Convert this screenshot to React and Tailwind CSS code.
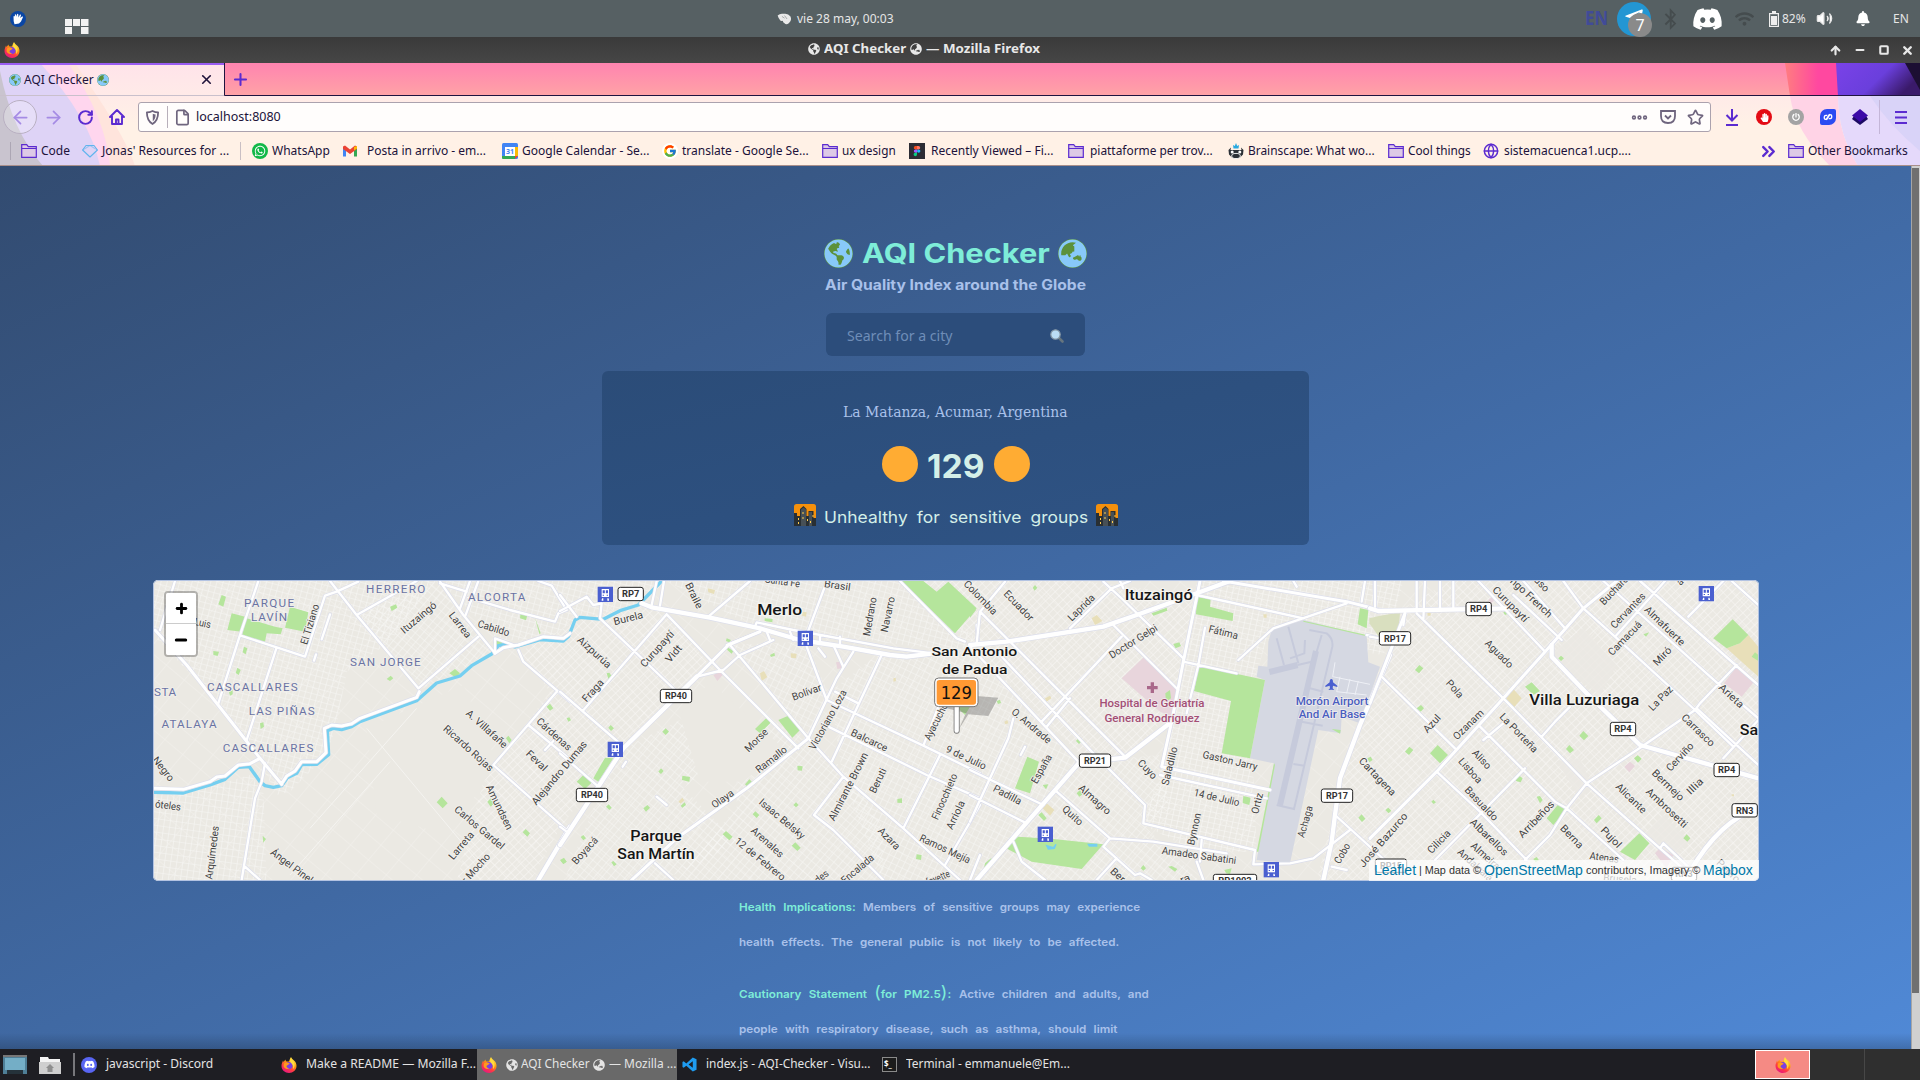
import React, { useLayoutEffect, useRef, useState } from "react";
import { FaDiscord, FaWhatsapp, FaBluetoothB, FaGlobeAmericas, FaGlobeAsia, FaTelegramPlane, FaWifi, FaBell, FaHandPaper, FaPowerOff } from "react-icons/fa";
import { FcGoogle } from "react-icons/fc";
import { ArrowLeft, ArrowRight, ArrowUp, RotateCw, Plus, X, Minus, Square, File, Star, Ellipsis, Menu, ChevronsRight, Globe, Volume2 } from "lucide-react";

/* Single line of text stretched to an exact width. */
function Fit({ w, className = "", children }) {
  const ref = useRef(null);
  const [s, setS] = useState(1);
  useLayoutEffect(() => {
    setS(w / ref.current.offsetWidth);
  }, [w]);
  return (
    <span className={"inline-block shrink-0 whitespace-nowrap " + className} style={{ width: w }}>
      <span ref={ref} className="inline-block origin-left" style={{ transform: `scaleX(${s})` }}>
        {children}
      </span>
    </span>
  );
}

function Firefox({ className = "h-4 w-4" }) {
  return (
    <svg viewBox="0 0 32 32" className={"shrink-0 " + className}>
      <defs>
        <linearGradient id="ffx" x1="0.8" y1="0" x2="0.25" y2="1">
          <stop offset="0" stopColor="#fff44f" />
          <stop offset="0.4" stopColor="#ff980e" />
          <stop offset="0.7" stopColor="#ff3647" />
          <stop offset="1" stopColor="#e31587" />
        </linearGradient>
      </defs>
      <path d="M20 0c1 3 4 5 6 7 3 2 5 6 5 11 0 8-7 14-15 14S1 26 1 18c0-5 2-8 3-11l1 3 4-5c0 2 1 3 2 4h5c1-3 2-6 4-9z" fill="url(#ffx)" />
      <circle cx="16.5" cy="17" r="6.8" fill="#7a3fe0" />
      <path d="M6 13c3-3 7-2 9-1 3 0 3 2 0 3-1 2-4 1-4 4 0 2 3 4 6 3-4 4-11 1-12-4z" fill="#ff9a1f" />
      <path d="M20 1c0 4 7 6 7 13 1 5-1 8-3 10 1-6 0-9-5-13-2-4 0-7 1-10z" fill="#ffdc3e" />
    </svg>
  );
}

function Earth({ asia, className }) {
  const G = asia ? FaGlobeAsia : FaGlobeAmericas;
  return (
    <span className={"flex shrink-0 items-center justify-center rounded-full bg-[#5c913b] " + className}>
      <G className="h-full w-full text-[#88c9f9]" />
    </span>
  );
}

function Folder() {
  return (
    <svg viewBox="0 0 16 16" className="h-4 w-4 shrink-0">
      <path d="M.7 14.3V1.7h5l1.6 2h8v10.6z" fill="#ddc9e6" stroke="#5b2bd0" strokeWidth="1.2" />
      <path d="M.7 5.5h14.6" stroke="#5b2bd0" />
    </svg>
  );
}

function City() {
  return (
    <svg viewBox="0 0 22 22" className="h-[22px] w-[22px] shrink-0">
      <rect width="22" height="22" rx="2.5" fill="#f4900c" />
      <path d="M0 22V9h3v3h3V5l3.500-3 3 3v7h2V7h5v7h2.500v8z" fill="#292f33" />
      <path d="M7 22V5.500l2.500-2 2.500 2V22zM15 22V8h3v14z" fill="#475056" />
      <path d="M4 14h1v2H4zM4 18h1v2H4zM8.500 8h1v2h-1zM8.500 13h1v2h-1zM13 15h1v2h-1zM18.500 11h1v2h-1zM16 17h1v2h-1z" fill="#ffcc4d" />
    </svg>
  );
}

function VSCode() {
  return (
    <svg viewBox="0 0 16 16" className="h-[15px] w-[15px] shrink-0">
      <path d="M11.500.5 15.500 2.400v11.200L11.500 15.500 4.600 9.200 1.800 11.400.5 10.700V5.300l1.300-.7 2.800 2.200zM11.500 4.500 7 8l4.500 3.500z" fill="#1f9cf0" fillRule="evenodd" />
    </svg>
  );
}

/* ---------- desktop panel ---------- */

function TopPanel() {
  return (
    <div className="flex h-[37px] items-center bg-[#566063] text-[12px] text-[#e6e6e6]">
      <svg viewBox="0 0 16 16" className="ml-[10px] h-4 w-4">
        <circle cx="8" cy="8" r="8" fill="#0a46a4" />
        <path d="M3.500 6c0-1 1-1.500 1.500-.5L4.800 3.800c.3-.8 1-.8 1.300 0l.6 2L7 3.300c.4-.8 1.200-.7 1.300.1l.2 3 1.300-2.700c.5-.6 1.300-.3 1.200.5L10.200 7l1.800-1.500c.8-.3 1.200.3.8 1L11 10.500l-2 2-4.500.8-.8-3z" fill="#fff" />
      </svg>
      <svg viewBox="0 0 24 16" className="ml-[39px] mt-[16px] h-4 w-6" fill="#f2f2f2">
        <path d="M0 0h7v7H0zM8 0h7v7H8zM16 0h7.500v7H16zM0 8h7v7H0zM16 8h7.500v7H16z" />
      </svg>
      <svg viewBox="0 0 16 14" className="ml-[688px] h-[12px] w-[15px]">
        <path d="M0 3Q3 0 7 1q5-1 8 3 2 5-2 8-3 2-5 0-2-1-2-3-3 1-4-2-1-1-2-4z" fill="#e9e9e9" />
        <path d="m5 4 3 2M8 3l3 4" stroke="#9a9f9f" />
      </svg>
      <Fit w={97} className="ml-[5px]">vie 28 may, 00:03</Fit>
      <Fit w={23} className="ml-[691px] text-[19px] font-bold text-[#414b98]">EN</Fit>
      <span className="relative ml-[9px] flex h-[34px] w-[34px] shrink-0 items-center justify-center rounded-full bg-[#2396d3]">
        <FaTelegramPlane className="mb-1 h-5 w-5 text-white" />
        <span className="absolute -bottom-px -right-px flex h-[24px] w-[24px] items-center justify-center rounded-full bg-[#8a8a8a] text-[16px] text-white">7</span>
      </span>
      <FaBluetoothB className="ml-[12px] h-[22px] w-[15px] text-[#454c4e]" />
      <FaDiscord className="ml-[14px] h-[30px] w-[31px] text-white" />
      <FaWifi className="ml-[12px] h-[18px] w-[19px] text-[#454c4e]" />
      <svg viewBox="0 0 10 16" className="ml-[15px] h-4 w-[10px]">
        <path d="M3 0h4v2h3v14H0V2h3z" fill="#eee" />
        <path d="M1.200 3.200h7.600v11.600H1.200z" fill="#566063" />
        <path d="M2 5h6v9H2z" fill="#eee" />
      </svg>
      <Fit w={24} className="ml-[3px]">82%</Fit>
      <Volume2 className="ml-[10px] h-[17px] w-[17px] fill-white" />
      <FaBell className="ml-[23px] h-[15px] w-[14px] text-white" />
      <Fit w={16} className="ml-[23px]">EN</Fit>
    </div>
  );
}

function TitleBar() {
  return (
    <div className="flex h-[26px] items-center bg-gradient-to-b from-[#3a3a3a] to-[#464646] pb-[2px] text-[12px] font-bold text-[#e8e8e8]">
      <Firefox className="ml-[4px] mt-[2px] h-[16px] w-[16px]" />
      <FaGlobeAmericas className="ml-[788px] h-[12px] w-[12px]" />
      <Fit w={82} className="ml-[4px]">AQI Checker</Fit>
      <FaGlobeAsia className="ml-[4px] h-[12px] w-[12px]" />
      <Fit w={114} className="ml-[4px]">— Mozilla Firefox</Fit>
      <ArrowUp strokeWidth={4} className="ml-[789px] mt-[2px] h-[13px] w-[13px]" />
      <Minus strokeWidth={4} className="ml-[12px] mt-[2px] h-[12px] w-[12px]" />
      <Square strokeWidth={5} className="ml-[13px] mt-[2px] h-[10px] w-[10px]" />
      <X strokeWidth={4.5} className="ml-[12px] mt-[2px] h-[13px] w-[13px]" />
    </div>
  );
}

/* ---------- browser chrome ---------- */

const bookmarks = [
  ["Code", 29, "folder", "ml-[10px]", "ml-1"],
  ["Jonas' Resources for ...", 127, "gem", "ml-[12px]", "ml-1"],
  ["WhatsApp", 58, "wa", "ml-[11px]", "ml-1"],
  ["Posta in arrivo - em...", 119, "gmail", "ml-[12px]", "ml-[9px]"],
  ["Google Calendar - Se...", 127, "cal", "ml-[16px]", "ml-1"],
  ["translate - Google Se...", 127, "google", "ml-[13px]", "ml-1"],
  ["ux design", 54, "folder", "ml-[13px]", "ml-1"],
  ["Recently Viewed – Fi...", 122, "figma", "ml-[13px]", "ml-[6px]"],
  ["piattaforme per trov...", 123, "folder", "ml-[15px]", "ml-[6px]"],
  ["Brainscape: What wo...", 127, "brain", "ml-[15px]", "ml-1"],
  ["Cool things", 63, "folder", "ml-[13px]", "ml-1"],
  ["sistemacuenca1.ucp....", 127, "globe", "ml-[12px]", "ml-[5px]"],
];

function BookmarkIcon({ kind }) {
  switch (kind) {
    case "folder":
      return <Folder />;
    case "gem":
      return (
        <svg viewBox="0 0 16 16" className="h-4 w-4 shrink-0" fill="none" stroke="#5fb4ee" strokeWidth="1.100" strokeLinejoin="round">
          <path d="M4 2.500h8L15.400 7 8 14 .6 7z" />
          <path d="M.6 7 4 5l4-2.500L12 5l3.400 2" opacity="0.500" />
        </svg>
      );
    case "wa":
      return (
        <span className="flex h-4 w-4 shrink-0 items-center justify-center rounded-full bg-[#12b848]">
          <FaWhatsapp className="h-3 w-3 text-white" />
        </span>
      );
    case "gmail":
      return (
        <svg viewBox="0 0 16 16" className="h-4 w-4 shrink-0">
          <path d="M1 4v9.500h3V7z" fill="#4285f4" />
          <path d="M15 4v9.500h-3V7z" fill="#34a853" />
          <path d="M1 3.500 3 2.500 8 6.500l5-4 2 1V6L8 11 1 6z" fill="#ea4335" />
          <path d="M12 4v3.500L15 5.500V3z" fill="#fbbc04" />
        </svg>
      );
    case "cal":
      return (
        <svg viewBox="0 0 16 16" className="h-4 w-4 shrink-0">
          <rect width="16" height="16" rx="1.500" fill="#4285f4" />
          <path d="M13 4h3v9h-3z" fill="#fbbc04" />
          <path d="M0 13h13v3H1.500Q0 16 0 14.500z" fill="#34a853" />
          <path d="M13 13h3l-3 3z" fill="#ea4335" />
          <path d="M3 4h10v9H3z" fill="#fff" />
          <text x="8" y="11" fontSize="7" fontWeight="700" textAnchor="middle" fill="#4285f4">31</text>
        </svg>
      );
    case "google":
      return (
        <span className="flex h-4 w-4 shrink-0 items-center justify-center rounded-full bg-white">
          <FcGoogle className="h-[14px] w-[14px]" />
        </span>
      );
    case "figma":
      return (
        <svg viewBox="0 0 16 16" className="h-4 w-4 shrink-0">
          <path d="M0 0h16v16H0z" fill="#2c2c34" />
          <path d="M8 3H6.500a1.700 1.700 0 0 0 0 3.400H8z" fill="#f24e1e" />
          <path d="M8 3h1.500a1.700 1.700 0 0 1 0 3.400H8z" fill="#ff7262" />
          <path d="M8 6.400H6.500a1.700 1.700 0 0 0 0 3.400H8z" fill="#a259ff" />
          <circle cx="9.700" cy="8.100" r="1.700" fill="#1abcfe" />
          <path d="M8 9.800H6.500A1.700 1.700 0 1 0 8 11.500z" fill="#0acf83" />
        </svg>
      );
    case "brain":
      return (
        <svg viewBox="0 0 16 16" className="h-4 w-4 shrink-0">
          <path d="M.5 7 3 4.500 2.500 7h11L13 4.500 15.500 7l-.5 4.500-3 3H4l-3-3z" fill="#2b3036" />
          <path d="m8 0 1.200 3L11 2l-.5 3.500h-5L5 2l1.800 1z" fill="#29a9e0" />
          <circle cx="4.200" cy="9" r="1.500" fill="#fff" />
          <circle cx="11.800" cy="9" r="1.500" fill="#fff" />
          <ellipse cx="8" cy="13" rx="4.300" ry="2.600" fill="#2b3036" stroke="#fff" strokeWidth="0.900" />
        </svg>
      );
    default:
      return <Globe strokeWidth={2.2} className="h-4 w-4 shrink-0 text-[#5b2bd0]" />;
  }
}

function BrowserChrome() {
  return (
    <div className="relative h-[103px] overflow-hidden bg-[#fff1e6]">
      {/* theme artwork behind the bars */}
      <svg viewBox="0 0 1920 103" className="absolute inset-0 h-[103px] w-[1920px]">
        <defs>
          <linearGradient id="strip" x1="0" y1="0" x2="0" y2="1">
            <stop offset="0" stopColor="#ff84b0" />
            <stop offset="1" stopColor="#ffa3a6" />
          </linearGradient>
          <linearGradient id="tool" x1="0" y1="0" x2="0" y2="1">
            <stop offset="0" stopColor="#ffe3ea" />
            <stop offset="0.6" stopColor="#fff1e6" />
          </linearGradient>
          <linearGradient id="hot" x1="0" y1="0" x2="1" y2="0">
            <stop offset="0" stopColor="#ff7d80" />
            <stop offset="0.6" stopColor="#ff48a0" />
          </linearGradient>
          <linearGradient id="vio" x1="0" y1="0" x2="1" y2="0.4">
            <stop offset="0" stopColor="#7a42e8" />
            <stop offset="0.6" stopColor="#6a3fdc" />
            <stop offset="1" stopColor="#3a1a6a" />
          </linearGradient>
        </defs>
        <path d="M0 0h1920v103H0z" fill="url(#tool)" />
        <path d="M224 0H1920v33H224z" fill="url(#strip)" />
        <path d="M1785 0h55v33h-50z" fill="url(#hot)" />
        <path d="M1836 0h84v33h-82z" fill="url(#vio)" />
        <path d="M1905 0h15v27z" fill="#1c0f33" />
        <path d="M0 0h75l22 33q30 45 38 70H0z" fill="#ffe4dc" />
        <path d="M0 0h68q38 55 42 103H0z" fill="#ffd6ee" />
        <path d="M0 0h40q50 55 60 103H0z" fill="#ded3f6" />
        <path d="M0 8q12 60 43 95H0z" fill="#c9c4cf" />
        <path d="M1790 33h48q0 38 20 70h-28q-35-35-40-70z" fill="#ffd3e6" />
        <path d="M1838 33h82v70h-62q-20-32-20-70z" fill="#e5d9fb" />
        <path d="M1870 33h50v55q-30-25-50-55z" fill="#d9d3f8" />
        <path d="M0 0h224v2H0z" fill="#9a5cf2" />
        <path d="M224.500 0v32.500H1920" fill="none" stroke="#1f1440" />
        <path d="M0 32.500h224" stroke="#c9c0cc" />
        <path d="M0 102.500h1920" stroke="#a98f8b" />
      </svg>
      <div className="relative flex h-[33px] items-center text-[12px] text-[#20123a]">
        <Earth className="ml-[9px] h-[12px] w-[12px]" />
        <Fit w={70} className="ml-[3px]">AQI Checker</Fit>
        <Earth asia className="ml-[3px] h-[12px] w-[12px]" />
        <X strokeWidth={2.600} className="ml-[90px] h-[15px] w-[15px]" />
        <Plus strokeWidth={2.600} className="ml-[17px] h-[19px] w-[19px] text-[#5b2bd0]" />
      </div>
      <div className="relative mt-px flex h-[40px] items-center text-[#5b2bd0]">
        <span className="ml-[3px] flex h-[34px] w-[34px] items-center justify-center rounded-full border border-[#b9b0c2] bg-white/25">
          <ArrowLeft className="h-[21px] w-[21px] text-[#a58be4]" />
        </span>
        <ArrowRight className="ml-[6px] h-[21px] w-[21px] text-[#a58be4]" />
        <RotateCw strokeWidth={2.800} className="ml-[13px] h-[17px] w-[17px]" />
        <svg viewBox="0 0 16 16" className="ml-[15px] h-4 w-4" fill="none" stroke="currentColor" strokeWidth="1.900" strokeLinecap="round" strokeLinejoin="round">
          <path d="M1 8 8 1l7 7M3 7v8h10V7" />
          <path d="M7 15v-4.500h2.500V15" />
        </svg>
        <div className="ml-[13px] flex h-[30px] w-[1573px] items-center rounded-[3px] border border-[#aba2ae] bg-[#fffdfc] text-[#6f657e]">
          <svg viewBox="0 0 16 16" className="ml-[6px] h-[15px] w-[15px]">
            <path d="M8 1q3 1.500 6 1.500 0 9-6 12.500Q2 11.500 2 2.500 5 2.500 8 1z" fill="none" stroke="currentColor" strokeWidth="1.900" strokeLinejoin="round" />
            <path d="M8.300 4q1.500.8 3 .8 0 5-3 7.200z" fill="currentColor" />
          </svg>
          <span className="ml-[7px] h-[22px] w-px bg-[#b8afba]" />
          <File strokeWidth={2.400} className="ml-[6px] h-[17px] w-[17px]" />
          <Fit w={85} className="ml-[5px] text-[12.5px] text-[#20123a]">localhost:8080</Fit>
          <Ellipsis strokeWidth={3.500} className="ml-[1349px] h-[19px] w-[19px]" />
          <svg viewBox="0 0 16 16" className="ml-[11px] h-[16px] w-[16px]" fill="none" stroke="currentColor" strokeWidth="1.800">
            <path d="M1 2h14v5q0 7-7 7T1 7z" />
            <path d="m5 6.500 3 3 3-3" />
          </svg>
          <Star strokeWidth={2.400} className="ml-[11px] h-[17px] w-[17px]" />
        </div>
        <svg viewBox="0 0 16 18" className="ml-[13px] h-[18px] w-[16px]" fill="none" stroke="currentColor" strokeWidth="2">
          <path d="M8 1v11M2.500 7 8 12.500 13.500 7M2 17h12" />
        </svg>
        <span className="ml-[16px] flex h-[16px] w-[16px] items-center justify-center rounded-full bg-[#e30b14]">
          <FaHandPaper className="h-[9px] w-[9px] text-white" />
        </span>
        <span className="ml-[16px] flex h-[16px] w-[16px] items-center justify-center rounded-full bg-[#a3a3a3]">
          <FaPowerOff className="h-[8px] w-[8px] text-white" />
        </span>
        <span className="ml-[16px] flex h-[16px] w-[16px] items-center justify-center rounded-[2px] rounded-br-[7px] rounded-tl-[7px] bg-[#2b4bf2]">
          <svg viewBox="0 0 16 16" className="h-3 w-3" fill="none" stroke="#fff" strokeWidth="1.800">
            <path d="M11 4 6.500 11Q3 12 3 8.500T7 6M5 12 9.500 5Q13 4 13 7.500T9 10" />
          </svg>
        </span>
        <svg viewBox="0 0 16 16" className="ml-[16px] h-4 w-4">
          <path d="m0 10 2-3h12l2 3-8 6z" fill="#1c0a63" />
          <path d="m8 0 8 6.500-8 6.500-8-6.500z" fill="#3c0aa8" />
        </svg>
        <span className="ml-[11px] h-[34px] w-px bg-[#c4b6d8]" />
        <svg viewBox="0 0 12 13" className="ml-[15px] h-[13px] w-[12px]" stroke="currentColor" strokeWidth="2">
          <path d="M0 1h12M0 6.500h12M0 12h12" />
        </svg>
      </div>
      <div className="relative mt-px flex h-[26px] items-center text-[12px] text-[#20123a]">
        <span className="ml-[10px] h-[18px] w-px bg-[#aca6b4]" />
        {bookmarks.map(([label, w, kind, before, gap]) => (
          <React.Fragment key={label}>
            {kind === "wa" && <span className="ml-[11px] h-[18px] w-px shrink-0 bg-[#c9bfc4]" />}
            <span className={"flex shrink-0 items-center " + before}>
              <BookmarkIcon kind={kind} />
              <Fit w={w} className={gap}>{label}</Fit>
            </span>
          </React.Fragment>
        ))}
        <ChevronsRight strokeWidth={2.800} className="ml-auto mr-[9px] h-[21px] w-[21px] text-[#5b2bd0]" />
        <span className="mr-[12px] flex shrink-0 items-center gap-1">
          <Folder />
          <Fit w={100}>Other Bookmarks</Fit>
        </span>
      </div>
    </div>
  );
}

/* ---------- map ---------- */
/* Map units are a third of a pixel; the sheet is cut in four tiles. */

const tiles = [
  {
    x: 0,
    roads: [
      [8, "M75 18 30 165M325 18 270 180 205 385M272 182 380 217 465 245 525 62 560 50 625 20M380 217 290 495M540 18 620 120 700 215 805 340M620 120 800 18M870 20 940 120 1035 235M805 340 985 185M870 25 950 50M960 18 930 100M985 18 945 125M955 68 1080 105 1215 140 1225 115 1250 105 1205 32 1165 18M345 565 335 620 315 670 275 915M285 875 330 915M1105 225 1120 260 1260 380M1220 350 1030 570 1250 765M1135 450 1250 545M1035 235V190L1090 210M540 118 515 193M498 238 492 257M1210 498 1185 525"],
      [10, "M15 165 110 270 330 550 395 628M12 640 100 643 180 620 200 606 225 603 265 570 300 566 330 550M395 626 410 603 435 588 455 560 500 560 528 533 523 460 545 450 575 453 605 446 630 430 800 367 808 350M1035 235 1060 218 1105 210 1180 185 1240 190 1260 175"],
      [14, "M1260 755 1165 915"],
    ],
    green: "M245 115 285 125 275 170 232 165ZM290 130 375 155 398 160 392 178 350 175 345 200 275 185ZM420 95 475 112 465 170 405 158ZM720 95 738 88 742 98 725 108ZM1112 112 1132 120 1128 136 1110 130ZM898 295 915 282 930 295 918 308ZM860 682 875 665 893 685 878 700ZM215 60 228 65 220 95 205 88ZM190 228 207 230 203 243 190 240ZM282 215 292 220 287 238 278 232ZM262 278 272 285 266 300 257 294ZM1035 190 1060 198 1050 215 1030 205ZM1190 395 1200 386 1210 400 1200 407ZM1118 772 1127 762 1140 775 1132 785ZM1232 857 1242 848 1250 860 1240 867ZM330 445 340 442 342 455 332 462ZM1012 680 1022 670 1033 685 1022 695ZM710 312 722 302 730 310 720 318ZM1155 128 1172 175 1168 177ZM1068 490 1075 482 1085 495 1078 505ZM338 782 348 792 340 803ZM237 352 248 345 248 358 240 362Z",
    labels: [
      ["Luis", 158, 145, 12, 50], ["El Tiziano", 480, 148, -73, 125], ["Ituzaingó", 806, 128, -40, 130], ["Larrea", 930, 150, 52, 90], ["Cabildo", 1031, 160, 17, 98],
      ["A. Villafañe", 1010, 462, 42, 155], ["Ricardo Rojas", 955, 520, 42, 190], ["Cárdenas", 1212, 478, 42, 130], ["Feval", 1160, 557, 44, 75], ["Amundsen", 1048, 697, 64, 145],
      ["Carlos Gardel", 988, 758, 40, 185], ["Larreta", 934, 812, -50, 100], ["r Mocho", 978, 880, -48, 110], ["Ángel Pinel", 425, 873, 37, 150], ["Arquímedes", 187, 833, -83, 162], ["Negro", 40, 582, 52, 85], ["óteles", 54, 692, 8, 78], ["Alejandro Dumas", 1228, 594, -50, 240],
    ],
    areas: [["PARQUE", 357, 83, 150], ["LAVÍN", 357, 124, 108], ["HERRERO", 737, 41, 178], ["ALCORTA", 1040, 64, 172], ["SAN JORGE", 706, 260, 212], ["CASCALLARES", 307, 336, 272], ["LAS PIÑAS", 395, 408, 198], ["ATALAYA", 117, 445, 165], ["CASCALLARES", 354, 518, 272], ["STA", 45, 350, 66]],
    shields: [], trains: [], towns: [],
  },
  {
    x: 1230,
    roads: [
      [8, "M585 155 590 142 700 165 1000 220 1120 235M740 180 800 20M445 125 570 18M320 118 480 285 715 520M320 118 68 408M0 60 50 125M0 108 80 65 100 90 125 85 120 130 345 345M275 90 290 18M300 92 312 18M410 305 490 285 540 240 640 195M620 170 630 195M510 210 745 490M0 350 185 510M0 535 115 635M0 755 20 770M745 490 830 310 880 230M740 215 800 375 1090 512 1260 595M965 240 815 560M785 445 1100 600 1260 670M745 490 850 605 1030 760 1200 915M850 605 762 720 820 765 970 915M1140 540 1030 760M1135 395 1090 512M1260 690 1155 870M1260 840 1230 915M1020 18 1190 190 1215 200M1250 150 1255 210M285 865 340 915M825 350 895 385M820 210 850 275M775 220 795 245M290 665 320 690M198 560 188 575M500 210 600 170M780 180V205M840 185V215M690 170 700 195"],
      [10, "M745 490 560 640 350 790 215 915M600 170 505 210 410 305"],
      [14, "M245 85 275 97 450 128 600 160 720 195 850 215 990 240 1040 245 1120 235M410 305 190 520 115 635 0 810"],
    ],
    green: "M1025 18H1090L1130 50 1165 20 1250 100 1185 175ZM655 435 685 422 720 465 697 488ZM585 462 620 428 635 440 600 475ZM100 610 135 548 160 550 115 620ZM50 620 70 600 98 620 75 642ZM1190 395H1230L1215 420ZM140 295 148 293 155 303 145 312ZM145 458 152 450 162 460 153 468ZM307 470 317 460 327 470 317 480ZM367 602 390 606 388 620 366 615ZM488 778 498 768 518 785 508 796ZM695 812 706 802 722 818 712 828ZM578 718 586 709 598 720 590 729ZM555 628 568 613 577 622 562 635ZM250 700 262 690 270 698 258 710ZM295 590 303 580 311 588 303 597ZM614 130 638 132 637 142 614 138ZM712 572 728 574 726 587 713 586ZM1012 672 1026 670 1026 684 1012 683ZM1070 838 1085 840 1083 855 1068 852ZM630 240 643 233 645 242 633 246ZM500 190 513 195 508 202 498 198ZM500 215 520 228 515 236 502 225ZM362 692 374 682 378 690 367 698ZM154 862 160 858 170 868 162 874ZM700 690 708 682 716 690 708 697ZM20 430 28 427 33 436 25 440ZM62 786 70 780 78 790 70 796ZM0 855 10 850 20 860 10 867ZM138 695 146 688 155 698 148 705Z",
    tan: "M600 295 612 288 622 306 605 318ZM692 235 710 236 708 250 693 248ZM443 40 465 45 462 57 445 52ZM728 110 740 112 738 125 726 122ZM355 680 367 668 373 676 362 686ZM1000 310 1007 308 1008 318 1000 320Z",
    pink: "M828 262 840 260 845 280 832 282ZM460 300 480 290 490 298 472 318Z",
    labels: [
      ["Braile", 402, 62, 64, 82], ["Burela", 205, 130, -14, 90], ["Aizpurúa", 103, 232, 42, 125], ["Curupaytí", 292, 222, -48, 135], ["Vidt", 341, 236, -50, 58], ["Fraga", 99, 347, -48, 80], ["Santa Fe", 668, 20, 8, 105], ["Brasil", 832, 32, 8, 80],
      ["Medrano", 930, 125, -80, 118], ["Navarro", 984, 118, -78, 108], ["Bolívar", 740, 352, -20, 92], ["Victoriano Loza", 804, 434, -61, 200], ["Morse", 589, 496, -45, 85], ["Ramallo", 634, 554, -38, 110], ["Balcarce", 928, 496, 25, 118], ["Ayacucho", 1128, 440, -63, 120], ["9 de Julio", 1218, 548, 25, 130],
      ["Almirante Brown", 865, 635, -63, 225], ["Beruti", 954, 617, -64, 80], ["Finocchieto", 1154, 665, -66, 148], ["Arriola", 1187, 720, -65, 92], ["Olaya", 488, 672, -35, 74], ["Isaac Belsky", 666, 732, 40, 170], ["Arenales", 622, 802, 42, 120], ["12 de Febrero", 600, 852, 39, 185], ["Azara", 987, 791, 45, 80], ["Ramos Mejía", 1155, 822, 25, 165], ["Encalada", 893, 882, -40, 118], ["Boyacá", 75, 827, -48, 100], ["des", 785, 905, -38, 45], ["Lafayette", 1122, 914, -22, 100],
    ],
    areas: [],
    shields: [["RP7", 212, 57], ["RP40", 348, 363], ["RP40", 96, 660]],
    trains: [[136, 58], [736, 190], [166, 523]],
    towns: [["Merlo", 659, 106, 135, 44], ["Parque", 288, 784, 154, 43], ["San Martín", 288, 838, 232, 43]],
  },
  {
    x: 2460,
    roads: [
      [8, "M400 20 460 75 640 250M105 20 30 110 20 205M30 110 230 310 465 545M0 215 325 560M90 240 370 535M300 160 425 40 480 18M430 150 625 345M455 185 215 440M300 370 230 455M705 158 685 270 650 415M640 260 800 295M680 60 1000 130M805 255 910 160 1130 85M370 535 525 690 520 745 855 825 850 868M260 650 420 790 550 800 770 835M420 790 400 815 495 900 510 895 545 915M0 585 220 690M0 660 170 745M130 430 115 490 0 740M130 800 155 860 225 915M850 868 960 865 1030 850 1140 765M1095 720 1260 870M1185 18 1175 80M1213 18 1215 95M1190 180 1230 190M570 600 890 670M1085 875 1130 885M695 795 690 860M680 860 700 915M1235 305 1260 330M165 515 152 540M450 18 460 40M970 18 980 35M440 850 380 915"],
      [10, "M690 18 640 260 605 440 575 575 900 645M760 18 1130 80 1230 105"],
      [14, "M0 210 110 200 400 155 500 120 680 55 780 18M605 440 465 548 400 555 330 560 260 640 120 800 20 915M1260 240 1170 450 1110 610 1095 720 1085 800 1060 915"],
    ],
    green: "M688 272 885 315 840 550 755 535 783 378 672 348ZM680 65 722 72 720 95 790 115 788 138 678 118ZM145 785 250 792 400 808 335 882 185 860 100 815ZM0 85 18 105 0 128ZM172 545 207 560 180 655 135 640ZM610 207 628 202 633 213 617 220ZM545 115 590 98 592 107 550 122ZM1170 100 1195 105 1190 160 1163 148ZM820 663 842 668 838 690 818 684ZM912 565 915 570 865 830 860 830ZM1000 137 1190 180V184L1000 140ZM188 38 195 30 202 38 194 47ZM318 498 325 490 334 500 327 507ZM45 865 65 848 58 872 42 880ZM205 720 215 712 230 730 222 738ZM1165 728 1175 718 1186 731 1176 741ZM763 885 785 880 780 898 768 895ZM80 378 90 374 93 384 84 387ZM320 655 330 645 338 658 328 665ZM218 630 235 628 228 643ZM595 875 605 873 622 882 615 890ZM512 880 520 870 528 880 520 887ZM1192 550 1202 545 1208 555 1198 562ZM1085 462 1112 465 1110 476ZM586 355 600 345 603 370 588 380Z",
    tan: "M365 130 380 120 397 138 375 150ZM218 700 230 685 253 705 240 722ZM155 788H183V803H158ZM225 370 240 362 244 370 230 380ZM103 440 112 435 115 445 106 448ZM880 118H890V128H881Z",
    pink: "M520 248 620 340 605 425 570 410 455 310Z",
    labels: [
      ["Colombia", 31, 68, 46, 130], ["Ecuador", 146, 92, 46, 115], ["Laprida", 334, 98, -44, 100], ["Doctor Gelpi", 490, 200, -32, 165], ["Fátima", 760, 172, 14, 90], ["O. Andrade", 184, 453, 40, 145], ["España", 215, 582, -60, 95], ["Padilla", 112, 660, 28, 92], ["Almagro", 374, 674, 42, 118], ["Quito", 308, 722, 42, 72], ["Cuyo", 532, 583, 46, 68],
      ["Saladillo", 599, 573, -76, 118], ["Gaston Jarry", 780, 557, 13, 168], ["14 de Julio", 740, 668, 13, 140], ["Ortiz", 862, 685, -76, 64], ["Bynnon", 673, 762, -77, 98], ["Amadeo Sabatini", 687, 842, 8, 225], ["Achaga", 1006, 740, -74, 98], ["Cobo", 1117, 835, -60, 65], ["José Bazurco", 1240, 795, -49, 205], ["Cartagena", 1222, 605, 46, 145], ["Ber", 443, 900, 42, 48], ["ra", 645, 912, -20, 30],
    ],
    areas: [],
    shields: [["RP21", 375, 557], ["RP17", 1101, 662], ["RP1003", 795, 918]],
    trains: [[226, 778], [904, 884]],
    towns: [["San Antonio", 13, 227, 257, 41], ["de Padua", 14, 281, 196, 41], ["Ituzaingó", 566, 60, 204, 43]],
  },
  {
    x: 3660,
    roads: [
      [8, "M15 18V95M140 18V100M165 18 160 135M210 18V100M250 18V100M140 115 400 370 650 625 870 820 950 890M325 18 525 230M885 18 735 185M580 18 640 100 735 185 975 405 1090 515M430 60 575 195M460 18 585 160M700 18 1060 340 1165 430M810 18 1165 330M955 125 1060 18M1085 18 1165 90M1100 270 990 385 975 405 815 515 650 625 590 700 540 780 465 855M1165 435 1060 550M330 455 555 680 590 700 760 855M400 445 340 495M465 580 195 855M200 590 330 710 470 855M515 485 555 440 600 395M35 305 255 520M870 820 880 805 960 880M0 185 30 190M105 115 100 150M430 400 400 370M980 400 1165 570"],
      [10, "M740 18 640 100 530 225 400 370 200 590 0 790M105 115 0 385"],
      [14, "M0 100 25 108 420 100M545 210V245L650 355 810 510 1165 610M1165 700Q1050 735 960 890"],
    ],
    green: "M1030 190 1088 133 1135 180 1110 205 1070 220ZM180 535 203 510 234 540 210 565ZM750 830 808 775 838 805 795 855ZM530 730 570 682 590 705 550 750ZM465 335 485 322 510 348 490 360ZM135 285 148 270 160 280 147 295ZM105 530 118 515 130 525 117 540ZM140 400 153 390 162 400 152 410ZM565 250 573 242 582 250 573 258ZM628 482 640 468 655 483 642 496ZM588 522 598 510 612 525 600 535ZM792 550 803 541 815 551 804 563ZM672 735 686 720 695 730 680 745ZM940 790 950 778 961 790 952 800ZM440 605 448 602 458 610 452 622 438 618ZM500 665 510 663 518 675 510 685ZM46 705 55 698 64 707 56 715ZM820 178 838 172 828 185ZM490 852 500 846 507 856 497 862ZM184 680 190 674 198 682 191 687ZM400 112 408 108 412 117 405 120ZM1145 245 1155 232 1165 240V258Z",
    tan: "M1110 205 1135 180 1165 215V305L1070 220ZM408 372 430 342 455 370 430 400ZM899 205 905 202 908 210 901 212ZM1085 658H1092V664H1085ZM172 113H182V122H173Z",
    pink: "M1100 275 1152 320 1115 365 1062 325ZM855 835 870 818 910 840 890 880ZM763 575 780 560 795 573 778 592ZM355 75 365 67 372 78 362 86Z",
    labels: [
      ["Curupaytí", 421, 88, 45, 138], ["Domingo French", 456, 42, 43, 235], ["uso", 515, 28, 45, 50], ["Aguado", 387, 237, 45, 105], ["Pola", 254, 342, 48, 62], ["Azul", 186, 446, -48, 62], ["Ozanam", 295, 449, -44, 115], ["La Porteña", 446, 474, 46, 150], ["Aliso", 335, 553, 46, 68], ["Lisboa", 301, 587, 48, 90], ["Basualdo", 334, 686, 46, 130], ["Albarellos", 357, 787, 44, 145], ["Cilicia", 207, 800, -46, 85], ["Almeira", 346, 843, 42, 105], ["Andalgalá", 315, 870, 42, 130],
      ["Arribeños", 499, 733, -46, 140], ["Berna", 605, 785, 46, 85], ["Pujol", 723, 787, 46, 75], ["Atenas", 703, 848, 8, 88], ["Brusela", 750, 912, 5, 100], ["Alicante", 783, 670, 44, 115], ["Bermejo", 894, 631, 44, 120], ["Ambrosetti", 890, 699, 43, 158], ["Illia", 975, 634, -44, 56], ["Cerviño", 930, 546, -47, 105], ["Carrasco", 984, 466, 44, 125], ["La Paz", 872, 370, -46, 90], ["Arieta", 1084, 363, 43, 90], ["Miró", 877, 244, -46, 65], ["Almafuerte", 884, 153, 44, 155], ["Camacuá", 765, 190, -46, 130], ["Cervantes", 774, 107, -46, 135], ["Buchardo", 738, 40, -46, 125], ["a", 930, 20, -45, 16], ["Pedro", 1075, 888, 44, 85],
    ],
    areas: [],
    shields: [["RP4", 326, 102], ["RP17", 75, 190], ["RP4", 759, 462], ["RP4", 1070, 585], ["RN3", 1124, 706], ["RP15", 63, 872], ["RN3", 942, 897]],
    trains: [[1009, 56]],
    towns: [["Villa Luzuriaga", 643, 374, 330, 44], ["Sa", 1137, 466, 55, 44]],
  },
];

function Grid({ id, rotate, sx, sy, color }) {
  return (
    <pattern id={id} width={sx} height={sy} patternUnits="userSpaceOnUse" patternTransform={`rotate(${rotate})`}>
      <path d={`M0 0H${sx}M0 0V${sy}`} stroke={color} strokeWidth="3.200" fill="none" />
    </pattern>
  );
}

function MapSheet() {
  return (
    <svg viewBox="9 15 4818 903" className="h-[301px] w-[1606px]" fontFamily="Roboto, sans-serif">
      <defs>
        <Grid id="g15" rotate={15} sx={18} sy={18} color="#f8f7f5" />
        <Grid id="g8" rotate={8} sx={18} sy={20} color="#f8f7f5" />
        <Grid id="g45" rotate={46} sx={17} sy={20} color="#f9f8f6" />
        <Grid id="g38" rotate={40} sx={18} sy={20} color="#f8f7f5" />
        <Grid id="g25" rotate={26} sx={18} sy={20} color="#f8f7f5" />
        <Grid id="g12" rotate={12} sx={18} sy={16} color="#faf9f7" />
        <Grid id="sparse" rotate={40} sx={70} sy={58} color="#f3f1ed" />
      </defs>
      <path d="M0 0H4900V930H0z" fill="#ebe9e3" />
      <path d="M0 0H4900V930H0z" fill="url(#sparse)" />
      <path d="M20 0H870L720 200 590 290 560 450 530 540 420 650 380 660 300 500 200 380 0 170Z" fill="url(#g15)" />
      <path d="M12 655 180 635 300 600 340 640 350 920H0Z" fill="url(#g8)" />
      <path d="M620 120 860 18 1030 235 820 340Z" fill="url(#g38)" />
      <path d="M870 18H1550L1460 90 1290 130 1200 185 1050 200Z" fill="url(#g15)" />
      <path d="M1110 230 1300 130 1480 85 1560 120 1670 260 1400 530 1230 760 1140 920H920L1000 620 1200 350Z" fill="url(#g45)" />
      <path d="M1400 530 1620 420 1700 560 1600 640 1760 800 1620 880 1520 920H1240Z" fill="url(#g38)" />
      <path d="M1550 18H2270L2490 200 2420 230 1800 150Z" fill="url(#g15)" />
      <path d="M1740 210 1970 200 2040 370 1975 480Z" fill="url(#g25)" />
      <path d="M1760 560 1850 430 1975 490 2100 600 2200 760 2200 920H1560L1760 700Z" fill="url(#g38)" />
      <path d="M2040 350 2180 240 2490 230 2790 560 2700 680 2480 920H2200L2080 620Z" fill="url(#g25)" />
      <path d="M2250 18H2800L3130 60 3090 300 3020 460 2930 540 2800 550 2480 220Z" fill="url(#g45)" />
      <path d="M2800 560 3030 540 3060 700 2990 760 3150 920H2480L2700 680Z" fill="url(#g38)" />
      <path d="M3140 18H3760L3700 240 3350 190 3300 370 3320 830H3140L2980 750 3040 560Z" fill="url(#g12)" />
      <path d="M3760 100 3900 18H4827V918H3500L3580 600 3670 380Z" fill="url(#g45)" />
      <path d="M4190 245 4300 160 4400 270 4350 360ZM4220 560 4290 550 4330 640 4290 670ZM4480 780 4540 720 4620 800 4560 850ZM4480 400 4550 340 4620 400 4560 450Z" fill="#ebe9e3" opacity="0.800" />
      <path d="M650 460 940 330 1040 560 900 780 680 720ZM1590 420 1680 320 1900 520 1780 620 1650 620Z" fill="#ebe9e3" />
      <path d="M650 460 1000 880M800 400 480 760M720 560 420 900" stroke="#f5f4f1" strokeWidth="3" fill="none" />
      <g transform="translate(2460 0)">
        <path d="M895 200 905 165 1000 135 1190 182 1195 262 1230 275 1170 445 1115 425 1112 475 1045 465 960 865 860 855 912 565 840 550 885 315 860 305 865 272 892 275Z" fill="#d5d8e2" />
        <g fill="none" stroke="#c6cadb" strokeWidth="6">
          <path d="M1038 228 930 690" strokeWidth="18" />
          <path d="M898 291 983 270" strokeWidth="18" />
          <path d="M1018 165 1070 175Q1090 190 1087 215L972 702 920 690M920 190 942 270M955 155 985 265M1005 195 1003 235 960 250M983 270 1025 260M1055 180 1040 230M970 567 1003 572M995 440 1058 452M1020 340 1060 350" />
        </g>
        <path d="M1095 262 1088 305 1200 328M1110 305 1100 350 1190 360M1140 312 1130 355M1165 318 1155 360" stroke="#eef0f6" strokeWidth="3" fill="none" />
        <path d="M1198 130Q1260 115 1290 115L1285 165 1230 190 1198 145Z" fill="#d9dfbf" />
      </g>
      {tiles.map((t) => (
        <g key={t.x} transform={`translate(${t.x} 0)`}>
          {t.pink && <path d={t.pink} fill="#e8d5dc" />}
          {t.tan && <path d={t.tan} fill="#e8dfb9" />}
          <path d={t.green} fill="#b5e59c" />
        </g>
      ))}
      <path d="M2690 812 2710 818 2718 808 2713 820 2695 822ZM2815 808H2840V813H2818Z" fill="#75cff0" stroke="#75cff0" strokeWidth="4" />
      <path d="M12 652 100 654 180 630 225 613 265 577 298 575 330 620 345 632 370 637 395 632 412 608 440 595 455 569 500 568 536 539 532 467 550 460 575 464 605 455 630 440 800 377 860 324 930 303 965 272 1025 237 1045 212 1065 208 1095 216 1170 194 1240 198 1256 184 1275 135 1290 127 1360 133 1410 107 1465 90 1535 18" fill="none" stroke="#75cff0" strokeWidth="10" strokeLinejoin="round" />
      {tiles.map((t) => (
        <g key={t.x} transform={`translate(${t.x} 0)`} fill="none" strokeLinejoin="round" strokeLinecap="round">
          {t.roads.map(([w, d]) => <path key={w} d={d} stroke="#dcdeeb" strokeWidth={w + 3} />)}
          {t.roads.map(([w, d]) => <path key={w + "f"} d={d} stroke="#fff" strokeWidth={w - 1} />)}
        </g>
      ))}
      {tiles.map((t) => (
        <g key={t.x} transform={`translate(${t.x} 0)`} textAnchor="middle">
          <g fontSize="31" fill="#444" stroke="#f3f1ed" strokeWidth="5" paintOrder="stroke" strokeLinejoin="round">
            {t.labels.map(([s, x, y, a, len]) => (
              <text key={s} transform={`translate(${x} ${y}) rotate(${a})`} y="10" textLength={len} lengthAdjust="spacingAndGlyphs">{s}</text>
            ))}
          </g>
          <g fontSize="35" fill="#6a73a3" stroke="#f1efeb" strokeWidth="5" paintOrder="stroke">
            {t.areas.map(([s, x, y, len]) => (
              <text key={s + y} x={x} y={y + 13} textLength={len}>{s}</text>
            ))}
          </g>
          {t.shields.map(([s, x, y]) => (
            <g key={s + x}>
              <rect x={x - (s.length > 4 ? 65 : s.length > 3 ? 47 : 38)} y={y - 20} width={s.length > 4 ? 130 : s.length > 3 ? 94 : 76} height="40" rx="7" fill="#fff" stroke="#222" strokeWidth="3" />
              <text x={x} y={y + 10} fontSize="28" fontWeight="700" fill="#333" textLength={s.length > 4 ? 100 : s.length > 3 ? 66 : 52} lengthAdjust="spacingAndGlyphs">{s}</text>
            </g>
          ))}
          {t.trains.map(([x, y]) => (
            <g key={x} transform={`translate(${x} ${y})`}>
              <path d="M-23-23H23V23H-23z" fill="#4a5fd0" />
              <path d="M-11-16H11V8H-11z" fill="#fff" />
              <path d="M-8-12H-1.500V-3H-8zM1.500-12H8V-3H1.500zM-8 1H-4V4H-8zM4 1H8V4H4z" fill="#4a5fd0" />
              <path d="M-8 12V17M8 12V17M-11 17H-6M6 17H11" stroke="#fff" strokeWidth="4" />
            </g>
          ))}
          <g fontWeight="500" fill="#161616" stroke="#f5f4f0" strokeWidth="7" paintOrder="stroke" strokeLinejoin="round">
            {t.towns.map(([s, x, y, len, size]) => (
              <text key={s} x={x} y={y + 15} fontSize={size} textLength={len} lengthAdjust="spacingAndGlyphs">{s}</text>
            ))}
          </g>
        </g>
      ))}
      <g transform="translate(2460 0)" textAnchor="middle" fontSize="34" fontWeight="500" stroke="#f1edee" strokeWidth="5" paintOrder="stroke">
        <path d="M547 322V354M531 338H563" stroke="#a9688a" strokeWidth="10" />
        <text x="546" y="397" textLength="315" lengthAdjust="spacingAndGlyphs" fill="#a34f74">Hospital de Geriatría</text>
        <text x="546" y="440" textLength="285" lengthAdjust="spacingAndGlyphs" fill="#a34f74">General Rodríguez</text>
        <path d="M1084 312q5 0 5 10l13 10v4l-13-4-1 8 5 5-9-1-9 1 5-5-1-8-13 4v-4l13-10q0-10 5-10z" fill="#4a5fd0" stroke="none" />
        <text x="1086" y="389" textLength="218" lengthAdjust="spacingAndGlyphs" fill="#4a5ec0">Morón Airport</text>
        <text x="1086" y="428" textLength="200" lengthAdjust="spacingAndGlyphs" fill="#4a5ec0">And Air Base</text>
      </g>
      {/* station marker */}
      <path d="M2385 398 2440 360 2545 368 2515 423 2455 418 2425 465 2448 415Z" fill="#555" opacity="0.350" />
      <path d="M2420 385V467" stroke="#777" strokeWidth="18" strokeLinecap="round" />
      <path d="M2420 385V467" stroke="#fff" strokeWidth="13" strokeLinecap="round" />
      <rect x="2354" y="309" width="130" height="86" rx="12" fill="#fff" stroke="#777" strokeWidth="3" />
      <rect x="2360" y="315" width="118" height="74" rx="8" fill="#ff9933" />
      <text x="2419" y="371" textAnchor="middle" fontSize="52" fontFamily="DejaVu Sans, sans-serif" fill="#111" textLength="94" lengthAdjust="spacingAndGlyphs">129</text>
    </svg>
  );
}

function MapPanel() {
  return (
    <div className="relative ml-[153px] mt-[35px] h-[301px] w-[1606px] overflow-hidden rounded-[5px] font-['Liberation_Sans',sans-serif]">
      <MapSheet />
      <div className="pointer-events-none absolute inset-0 rounded-[5px] border border-[#b3c3e2]" />
      <div className="absolute left-[11px] top-[11px] flex w-[34px] flex-col rounded-[4px] border-2 border-black/25 bg-clip-padding text-black">
        <span className="flex h-[31px] items-center justify-center rounded-t-[2px] border-b border-[#ccc] bg-white"><Plus strokeWidth={4.500} className="h-[15px] w-[15px]" /></span>
        <span className="flex h-[31px] items-center justify-center rounded-b-[2px] bg-white"><Minus strokeWidth={4.500} className="h-[16px] w-[16px]" /></span>
      </div>
      <div className="absolute bottom-0 right-0 flex h-[21px] items-center gap-[3px] bg-white/70 pl-[5px] pr-[6px] text-[11px] text-[#333]">
        <Fit w={42} className="text-[14px] text-[#0078a8]">Leaflet</Fit>
        <Fit w={62}>| Map data ©</Fit>
        <Fit w={99} className="text-[14px] text-[#0078a8]">OpenStreetMap</Fit>
        <Fit w={114}>contributors, Imagery ©</Fit>
        <Fit w={50} className="text-[14px] text-[#0078a8]">Mapbox</Fit>
      </div>
    </div>
  );
}

/* ---------- page ---------- */

function Page() {
  return (
    <div className="relative h-[883px] overflow-hidden bg-[linear-gradient(to_bottom_right,#324b70_0%,#4069a3_50%,#5089d6_100%)] pt-[73px] font-['Inter',sans-serif]">
      <div className="ml-[824px] flex h-[29px] items-center">
        <Earth className="h-[29px] w-[29px]" />
        <Fit w={188} className="ml-[9px] text-[26.500px] font-bold leading-[29px] text-[#7eedd8]">AQI Checker</Fit>
        <Earth asia className="ml-[8px] h-[29px] w-[29px]" />
      </div>
      <div className="ml-[825px] mt-[7px] h-[20px] text-[14px] font-bold leading-[20px] text-[#a9c1ea]">
        <Fit w={261}>Air Quality Index around the Globe</Fit>
      </div>
      <div className="ml-[826px] mt-[18px] flex h-[43px] w-[259px] items-center rounded-[6px] bg-[#2c4d7b] pt-[3px] font-['Noto_Sans',sans-serif] text-[14.500px] text-[#6f8db8]">
        <Fit w={105} className="ml-[21px]">Search for a city</Fit>
        <svg viewBox="0 0 14 14" className="ml-[98px] h-[14px] w-[14px]">
          <path d="m8 8 4.500 4.500" stroke="#66757f" strokeWidth="2.600" strokeLinecap="round" />
          <circle cx="5.500" cy="5.500" r="4.700" fill="#bbddf5" stroke="#8899a6" strokeWidth="1.200" />
        </svg>
      </div>
      <div className="ml-[602px] mt-[15px] flex h-[174px] w-[707px] flex-col items-center rounded-[6px] bg-gradient-to-br from-[#2b4c78] to-[#2f5486] pt-[31px] text-[#d4efe8]">
        <Fit w={225} className="h-[20px] font-['DejaVu_Serif',serif] text-[14px] leading-[20px] text-[#a9c1ea]">La Matanza, Acumar, Argentina</Fit>
        <div className="mt-[24px] flex h-[36px] items-center">
          <span className="h-[36px] w-[36px] rounded-full bg-[#ffac33]" />
          <Fit w={57} className="ml-[9px] mr-[10px] mt-[4px] text-[33px] font-bold leading-[36px]">129</Fit>
          <span className="h-[36px] w-[36px] rounded-full bg-[#ffac33]" />
        </div>
        <div className="mt-[22px] flex h-[22px] items-center gap-[8px]">
          <City />
          <Fit w={264} className="mt-[4px] text-[16.500px] leading-[22px] [word-spacing:4px]">Unhealthy for sensitive groups</Fit>
          <City />
        </div>
      </div>
      <MapPanel />
      <div className="ml-[739px] mt-[9px] text-[11px] font-semibold leading-[35px] text-[#a9c1ea] [word-spacing:4px]">
        <div className="flex h-[35px] gap-[7px]">
          <Fit w={117} className="text-[#7eedd8]">Health Implications:</Fit>
          <Fit w={277}>Members of sensitive groups may experience</Fit>
        </div>
        <div className="flex h-[35px]"><Fit w={380}>health effects. The general public is not likely to be affected.</Fit></div>
        <div className="mt-[17px] flex h-[35px] gap-[8px]">
          <Fit w={212} className="text-[#7eedd8]">Cautionary Statement <span className="text-[17px] font-normal leading-none">(</span>for PM2.5<span className="text-[17px] font-normal leading-none">)</span>:</Fit>
          <Fit w={190}>Active children and adults, and</Fit>
        </div>
        <div className="flex h-[35px]"><Fit w={378}>people with respiratory disease, such as asthma, should limit</Fit></div>
      </div>
      <div className="absolute bottom-0 left-0 h-[16px] w-full bg-gradient-to-t from-black/20 to-transparent" />
      <div className="absolute right-0 top-0 h-full w-[9px] border-l border-[#a5a5a5] bg-[#d0d0d0]">
        <div className="mt-[2px] h-[825px] w-[7px] bg-[#707070]" />
      </div>
    </div>
  );
}

function Taskbar() {
  return (
    <div className="flex h-[31px] items-center bg-[#1e1e23] text-[12.500px] text-[#e4e4e4]">
      <svg viewBox="0 0 24 20" className="ml-[3px] h-[20px] w-[24px]">
        <path d="M0 0h24v19H0z" fill="#4f7f97" />
        <path d="M2 3h20v12H2z" fill="#74aec6" />
        <path d="M0 0h24v2H0z" fill="#777" />
        <path d="M4 15h16v4H4z" fill="#25323a" />
      </svg>
      <svg viewBox="0 0 22 18" className="ml-[12px] h-[18px] w-[22px]">
        <path d="M1 1h8l1 2h11v5H1z" fill="#f4f4f4" />
        <path d="M0 6h22v12H0z" fill="#cfcfcf" />
        <path d="m11 8 4 4h-1.500v4h-5v-4H7z" fill="#8e8e8e" />
      </svg>
      <span className="ml-[12px] h-[23px] w-[2px] bg-[#77777b]" />
      <span className="ml-[6px] flex h-[16px] w-[16px] items-center justify-center rounded-full bg-[#5865f2]"><FaDiscord className="h-[11px] w-[11px] text-white" /></span>
      <Fit w={107} className="ml-[9px]">javascript - Discord</Fit>
      <Firefox className="ml-[68px] h-[16px] w-[16px]" />
      <Fit w={170} className="ml-[9px]">Make a README — Mozilla F...</Fit>
      <div className="ml-px flex h-full w-[200px] items-center bg-[#696969]">
        <Firefox className="ml-[4px] h-[16px] w-[16px]" />
        <FaGlobeAmericas className="ml-[9px] h-[12px] w-[12px]" />
        <Fit w={69} className="ml-[3px]">AQI Checker</Fit>
        <FaGlobeAsia className="ml-[3px] h-[12px] w-[12px]" />
        <Fit w={67} className="ml-[4px]">— Mozilla ...</Fit>
      </div>
      <span className="ml-[5px]"><VSCode /></span>
      <Fit w={164} className="ml-[9px]">index.js - AQI-Checker - Visu...</Fit>
      <span className="ml-[12px] flex h-[15px] w-[15px] border border-[#8a8a8a] bg-[#1b1b1b] pl-px text-[8px] font-bold leading-[11px] text-white">$_</span>
      <Fit w={164} className="ml-[9px]">Terminal - emmanuele@Em...</Fit>
      <div className="ml-auto flex h-full">
        <span className="mt-px flex h-[29px] w-[55px] items-center justify-center border border-white bg-[#f58a84]"><Firefox className="h-[16px] w-[16px]" /></span>
        <span className="h-full w-[55px] border-r border-[#474747] bg-[#2f2f2f]" />
        <span className="h-full w-[55px] bg-[#2f2f2f]" />
      </div>
    </div>
  );
}

export default function App() {
  return (
    <div className="h-[1080px] w-[1920px] overflow-hidden bg-[#1e1e23] font-['Noto_Sans',sans-serif]">
      <TopPanel />
      <TitleBar />
      <BrowserChrome />
      <Page />
      <Taskbar />
    </div>
  );
}
